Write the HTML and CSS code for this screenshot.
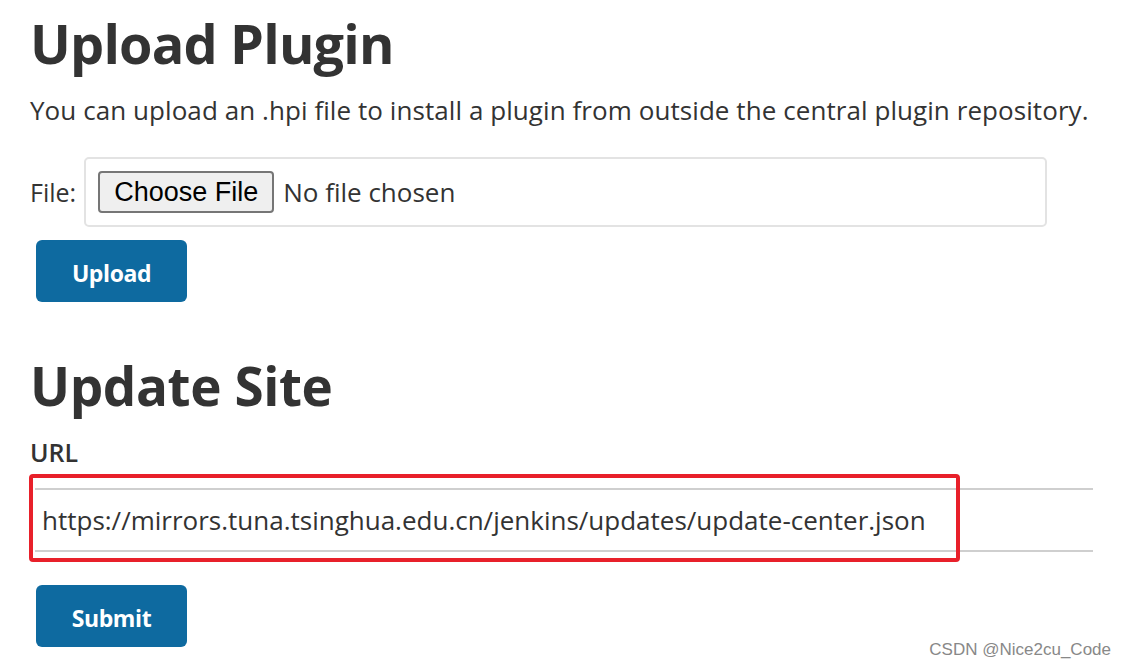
FILE: index.html
```html
<!DOCTYPE html>
<html>
<head>
<meta charset="utf-8">
<link rel="stylesheet" href="styles.css">
</head>
<body>
<main class="page">
  <section class="upload">
    <h1 class="title">Upload Plugin</h1>
    <p class="desc">You can upload an .hpi file to install a plugin from outside the central plugin repository.</p>
    <div class="file-row">
      <span class="file-label">File:</span>
      <div class="file-box">
        <span class="choose-btn">Choose File</span>
        <span class="no-file">No file chosen</span>
      </div>
    </div>
    <button class="primary-btn">Upload</button>
  </section>
  <section class="update">
    <h2 class="title title-2">Update Site</h2>
    <div class="url-label">URL</div>
    <div class="url-wrap">
      <div class="url-input">https://mirrors.tuna.tsinghua.edu.cn/jenkins/updates/update-center.json</div>
      <div class="highlight"></div>
    </div>
    <button class="primary-btn submit">Submit</button>
  </section>
  <div class="watermark">CSDN @Nice2cu_Code</div>
</main>
</body>
</html>
```

FILE: styles.css
```css
html, body {
  margin: 0;
  padding: 0;
  background: #ffffff;
}
body {
  font-family: "Open Sans", "Noto Sans", sans-serif;
  color: #333333;
  width: 1125px;
  height: 668px;
  overflow: hidden;
}
.page {
  position: relative;
  padding: 0 0 0 30px;
  height: 668px;
  box-sizing: border-box;
}
.title {
  margin: 0;
  font-weight: 700;
  font-size: 54px;
  line-height: 86px;
  color: #333333;
  letter-spacing: -0.8px;
}
.title-2 {
  font-size: 53px;
  letter-spacing: -0.4px;
}
.desc {
  margin: 2px 0 0 0;
  font-size: 26px;
  line-height: 44px;
  color: #333333;
  letter-spacing: 0.07px;
}
.file-row {
  display: flex;
  align-items: center;
  gap: 8px;
  margin-top: 25px;
}
.file-label {
  font-size: 25px;
}
.file-box {
  width: 963px;
  height: 70px;
  box-sizing: border-box;
  border: 2px solid #e3e3e3;
  border-radius: 5px;
  display: flex;
  align-items: center;
  padding-left: 12px;
  gap: 9px;
}
.choose-btn {
  font-family: "Liberation Sans", Arial, sans-serif;
  font-size: 27px;
  color: #000;
  background: #efefef;
  border: 2px solid #767676;
  border-radius: 4px;
  height: 42px;
  box-sizing: border-box;
  padding: 0 14px;
  display: flex;
  align-items: center;
}
.no-file {
  font-size: 26px;
  color: #333;
}
.primary-btn {
  display: block;
  margin: 13px 0 0 6px;
  width: 151px;
  height: 62px;
  border: none;
  border-radius: 6px;
  background: #0e6aa0;
  color: #ffffff;
  font-family: "Open Sans", sans-serif;
  font-weight: 700;
  font-size: 23px;
  letter-spacing: -0.4px;
  padding: 4px 0 0 0;
}
.update {
  margin-top: 41px;
}
.url-label {
  font-size: 25px;
  font-weight: 600;
  margin-top: 6px;
}
.url-wrap {
  position: relative;
  margin-top: 19px;
  width: 1063px;
}
.url-input {
  margin-left: 5px;
  height: 64px;
  box-sizing: border-box;
  border-top: 2px solid #cfcfcf;
  border-bottom: 2px solid #cfcfcf;
  font-size: 26px;
  color: #333;
  display: flex;
  align-items: center;
  padding-left: 7px;
}
.highlight {
  position: absolute;
  left: -1px;
  top: -14px;
  width: 931px;
  height: 88px;
  box-sizing: border-box;
  border: 4px solid #e8202a;
  border-radius: 4px;
}
.submit {
  margin-top: 33px;
}
.watermark {
  position: absolute;
  right: 14px;
  bottom: 8px;
  font-family: "Liberation Sans", Arial, sans-serif;
  font-size: 17px;
  color: #888888;
}
```
